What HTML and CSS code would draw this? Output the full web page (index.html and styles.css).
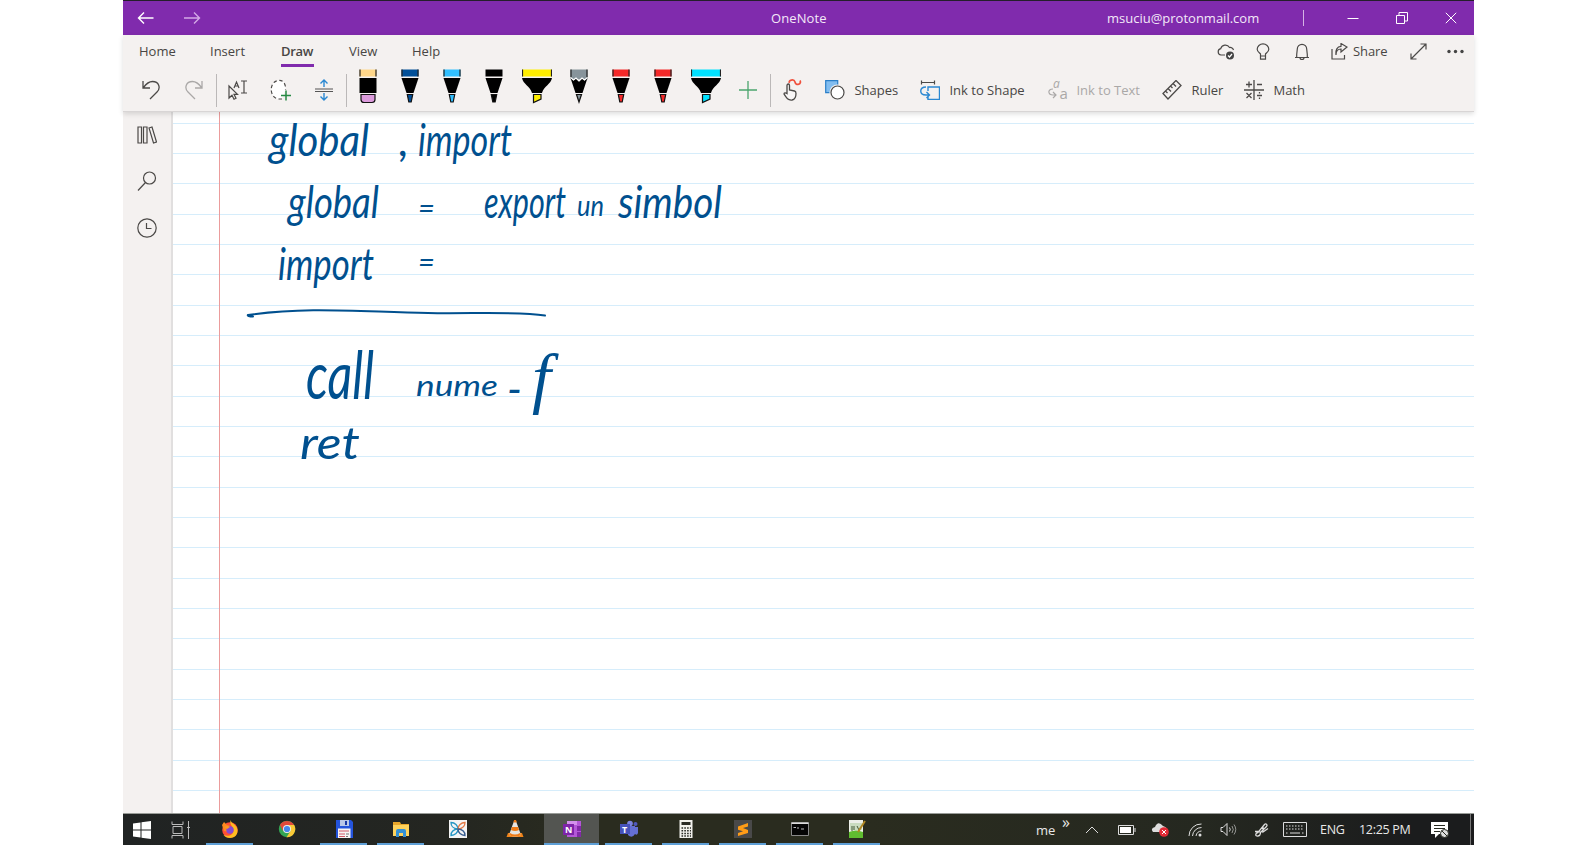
FILE: index.html
```html
<!DOCTYPE html>
<html lang="en">
<head>
<meta charset="utf-8">
<title>OneNote</title>
<link rel="stylesheet" href="styles.css">
</head>
<body>
<div class="desktop">
  <header class="titlebar">
    <div class="nav-arrows">
      <svg width="18" height="14" viewBox="0 0 18 14"><path d="M16.500 7H1.500M7 1.500 1.500 7 7 12.500"/></svg>
      <svg class="faded" width="18" height="14" viewBox="0 0 18 14"><path d="M0 7h15M10 1.500 15.500 7 10 12.500"/></svg>
    </div>
    <div class="title">OneNote</div>
    <div class="account">msuciu@protonmail.com</div>
    <div class="title-divider"></div>
    <div class="window-buttons">
      <svg width="12" height="12" viewBox="0 0 12 12"><path d="M.5 6.500h11"/></svg>
      <svg width="12" height="12" viewBox="0 0 12 12"><path d="M.5 3.500h8v8h-8zM3 3V.5h8.500V9H9"/></svg>
      <svg width="12" height="12" viewBox="0 0 12 12"><path d="m.8.8 10.400 10.400M11.200.8.8 11.200"/></svg>
    </div>
  </header>

  <div class="ribbon">
    <div class="tabs-row">
      <nav class="tabs">
        <span class="tab home">Home</span><span class="tab insert">Insert</span><span class="tab draw">Draw</span><span class="tab view">View</span><span class="tab help">Help</span>
      </nav>
      <div class="ribbon-actions">
        <svg class="sync" width="18" height="18" viewBox="0 0 18 18"><path d="M8 12H4a3.200 3.200 0 0 1-.3-6.300A4.800 4.800 0 0 1 12.500 4.500 3.300 3.300 0 0 1 16.500 7"/><circle cx="13" cy="12.500" r="4" fill="#444" stroke="none"/><path d="m11 12.500 1.500 1.500 2.500-3" stroke="#fff"/></svg>
        <svg class="bulb" width="14" height="18" viewBox="0 0 14 18"><path d="M4.500 13v-2C3.300 9.700 1.200 8.700 1.200 6.200a5.800 5.300 0 0 1 11.600 0c0 2.500-2.100 3.500-3.300 4.800v2zM4.500 13v3.200h5V13"/></svg>
        <svg class="bell" width="16" height="18" viewBox="0 0 16 18"><path d="M1 14.500h14M2.700 14.500v-3l.6-5.500a4.700 4.700 0 0 1 9.400 0l.6 5.500v3M6 14.500a2 2 0 0 0 4 0"/></svg>
        <svg class="share-icon" width="17" height="17" viewBox="0 0 17 17"><path d="M1 6v10h12.500v-4M5 12c0-4 2-6 5-6V9l6-5-6-3.500v2.800C6 3.500 4.500 7 5 12z"/></svg>
        <span class="share-label">Share</span>
        <svg class="expand" width="17" height="17" viewBox="0 0 17 17"><path d="M1 16 16 1M10.500 1H16v5.500M1 10.500V16h5.500"/></svg>
        <svg class="more" width="17" height="5" viewBox="0 0 17 5"><g fill="#444" stroke="none"><circle cx="2" cy="2.500" r="1.700"/><circle cx="8.500" cy="2.500" r="1.700"/><circle cx="15" cy="2.500" r="1.700"/></g></svg>
      </div>
    </div>

    <div class="tools-row">
      <div class="cell wide"><svg width="18" height="20" viewBox="0 0 18 20"><path d="M1 1v7h7M1.500 7.500C4 4 7 1.500 10.500 1.500c6.500 0 8.500 6.500 4.500 10.500L8 19" stroke-width="1.300"/></svg></div>
      <div class="cell wide disabled"><svg width="18" height="20" viewBox="0 0 18 20"><path d="M17 1v7h-7M16.500 7.500C14 4 11 1.500 7.500 1.500 1 1.500-1 8 3 12l7 7" stroke-width="1.300"/></svg></div>
      <div class="sep"></div>
      <div class="cell"><svg width="22" height="20" viewBox="0 0 22 20"><path d="M2 6v12l3-2.800 2 4 2-1-2-3.800h3.500zM7 8l2.500-6L12 8M8 6h3M14 1h6M14 13h6M17 1v12"/></svg></div>
      <div class="cell"><svg width="22" height="22" viewBox="0 0 22 22"><path d="M12 20H8C-1 18-1 3 8 1.500c5-1 8 3.500 7.500 9" stroke-dasharray="3.500 2.500" fill="#fff"/><path d="M16 11.500v10M11 16.500h10" stroke="#268a43" stroke-width="1.500"/></svg></div>
      <div class="cell"><svg width="18" height="22" viewBox="0 0 18 22"><path d="M0 10h18M0 12.500h18" stroke="#555"/><path d="M9 1v7M5.500 4.500 9 1l3.500 3.500M9 14v7M5.500 17.500 9 21l3.500-3.500" stroke="#2b88d2" stroke-width="1.400"/></svg></div>
      <div class="sep"></div>
      <div class="pens">
        <svg class="pen" viewBox="0 0 30 36"><path fill="#ffd78a" d="M6.500 1.500h17v7h-17z"/><path class="edge" d="M7 1.500v7M23 1.500v7"/><path d="M6.500 10h17v15h-17z"/><path fill="#dc9bdc" class="tip" d="M8 26.500h14v5q0 3-3 3h-8q-3 0-3-3z"/></svg>
        <svg class="pen" viewBox="0 0 30 36"><path fill="#004f99" d="M6.500 1.500h17v7h-17z"/><path class="edge" d="M7 1.500v7M23 1.500v7"/><path d="M6.500 10h17l-5 15h-7z"/><path fill="#004f99" class="tip" d="M12.300 26.500h5.400l-1.500 7.500h-2.400z"/></svg>
        <svg class="pen" viewBox="0 0 30 36"><path fill="#31bfff" d="M6.500 1.500h17v7h-17z"/><path class="edge" d="M7 1.500v7M23 1.500v7"/><path d="M6.500 10h17l-5 15h-7z"/><path fill="#31bfff" class="tip" d="M12.300 26.500h5.400l-1.500 7.500h-2.400z"/></svg>
        <svg class="pen" viewBox="0 0 30 36"><path d="M6.500 1.500h17v7h-17zM6.500 10h17l-5 15h-7z"/><path class="tip" d="M12.300 26.500h5.400l-1.500 7.500h-2.400z"/></svg>
        <svg class="pen" viewBox="0 0 30 36"><path fill="#ffee00" d="M0 1.500h30v7H0z"/><path class="edge" d="M.5 1.500v7M29.500 1.500v7"/><path d="M0 10h30c-1 6-8 8-10 15H10C8 18 1 16 0 10z"/><path fill="#ffee00" class="tip" d="M11.500 26.500h7.500v4.500l-7.500 3.500z"/></svg>
        <svg class="pen" viewBox="0 0 30 36"><path fill="#87949b" d="M6.500 1.500h17v10h-17z"/><path class="edge" d="M7 1.500v8M23 1.500v8"/><path d="m6.500 10 3 2.500 2.500-2 3 3 3-3 2.500 2 3-2.500-5 15h-7z"/><path fill="none" stroke="#fff" d="m6.500 9.500 3 2.500 2.500-2 3 3 3-3 2.500 2 3-2.500"/><path fill="#87949b" class="tip" d="M12.500 26.500h5L15 34z"/></svg>
        <svg class="pen" viewBox="0 0 30 36"><path fill="#f52929" d="M6.500 1.500h17v7h-17z"/><path class="edge" d="M7 1.500v7M23 1.500v7"/><path d="M6.500 10h17l-5 15h-7z"/><path fill="#f52929" class="tip" d="M12.300 26.500h5.400l-1.500 7.500h-2.400z"/></svg>
        <svg class="pen" viewBox="0 0 30 36"><path fill="#f52929" d="M6.500 1.500h17v7h-17z"/><path class="edge" d="M7 1.500v7M23 1.500v7"/><path d="M6.500 10h17l-5 15h-7z"/><path fill="#f52929" class="tip" d="M12.300 26.500h5.400l-1.500 7.500h-2.400z"/></svg>
        <svg class="pen" viewBox="0 0 30 36"><path fill="#00e1ff" d="M0 1.500h30v7H0z"/><path class="edge" d="M.5 1.500v7M29.500 1.500v7"/><path d="M0 10h30c-1 6-8 8-10 15H10C8 18 1 16 0 10z"/><path fill="#00e1ff" class="tip" d="M11.500 26.500h7.500v4.500l-7.500 3.500z"/></svg>
      </div>
      <div class="cell"><svg width="18" height="18" viewBox="0 0 18 18"><path d="M9 0v18M0 9h18" stroke="#4ba56d" stroke-width="1.300"/></svg></div>
      <div class="sep"></div>
      <div class="cell"><svg width="20" height="22" viewBox="0 0 20 22"><path d="M7.500 4C6 1 12-.5 13 3c1 4.500 7 2 5-1.500" stroke="#f0503c" stroke-width="1.700"/><path fill="#f8f6f6" d="M5 14V6.500c0-2 2.500-2 2.500 0V11l5 1c1.500.3 1.500 1 1.500 2.500 0 3-1 6-4 6.500-4 .5-5.500-2-8-6 0-1.500 1.500-1.500 3-.5z" stroke-width="1.300"/></svg></div>
      <div class="action shapes"><svg width="20" height="20" viewBox="0 0 20 20"><path fill="#82bdf0" stroke="#2b7fc8" d="M.7.7h12v12H.7z"/><circle cx="12.500" cy="12.500" r="7.500" fill="#f3f0f0" stroke="#f3f0f0"/><circle cx="12.500" cy="12.500" r="6.500" fill="#fff"/></svg><span>Shapes</span></div>
      <div class="action ink-shape"><svg width="20" height="20" viewBox="0 0 20 20"><path d="M1 2.500h14M1.500.5v4M14.500.5v4"/><path stroke="#2b88d2" stroke-width="1.400" d="M8 11V7h11.500v12.500H8V17M6 7c-7 0-7 8 0 8h3M6.500 12l3 3-3 3"/></svg><span>Ink to Shape</span></div>
      <div class="action ink-text disabled"><svg class="letters" width="20" height="20" viewBox="0 0 20 20"><path d="M5 9c-6 0-5 6 0 6h3M5 12l3 3-3 3"/><text x="5" y="8" font-size="12" font-style="italic">a</text><text x="11.500" y="19" font-size="15">a</text></svg><span>Ink to Text</span></div>
      <div class="action ruler"><svg width="20" height="20" viewBox="0 0 20 20"><path d="m1 13.500 13-13 5 5-13 13.500zM3.500 11l2 2M6 8.500l3 3M8.500 6l2 2M11 3.500l3 3" stroke-width="1.300"/></svg><span>Ruler</span></div>
      <div class="action math"><svg width="20" height="20" viewBox="0 0 20 20"><path d="M10 0v20M0 10h20M5 1.500v6M2 4.500h6M13 4.500h5M2.500 13l5 5M7.500 13l-5 5M13 15.500h5M15.500 12v1.500M15.500 17.500V19" stroke-width="1.300"/></svg><span>Math</span></div>
    </div>
  </div>

  <div class="workspace">
    <aside class="sidebar">
      <svg width="20" height="18" viewBox="0 0 20 18"><path d="M1 1h3.500v16H1zM6.500 1H10v16H6.500zM12 2l3-1 4.500 15-3 1z"/></svg>
      <svg width="20" height="20" viewBox="0 0 20 20"><circle cx="12.500" cy="7" r="6"/><path d="m8.500 11.500-7.500 8"/></svg>
      <svg width="20" height="20" viewBox="0 0 20 20"><circle cx="10" cy="10" r="9.200"/><path d="M9.500 5v5.500h5"/></svg>
    </aside>
    <main class="page">
      <svg class="ink" width="1301" height="701" viewBox="173 112 1301 701">
        <g class="ink-words">
          <text x="269" y="156" textLength="100" lengthAdjust="spacingAndGlyphs">global</text>
          <text x="399" y="156">,</text>
          <text x="418" y="156" textLength="94" lengthAdjust="spacingAndGlyphs">import</text>
          <text x="288" y="218" textLength="91" lengthAdjust="spacingAndGlyphs">global</text>
          <text class="small" x="418" y="218">=</text>
          <text x="484" y="218" textLength="82" lengthAdjust="spacingAndGlyphs">export</text>
          <text class="small" x="577" y="216" textLength="27" lengthAdjust="spacingAndGlyphs">un</text>
          <text x="618" y="218" textLength="104" lengthAdjust="spacingAndGlyphs">simbol</text>
          <text x="278" y="280" textLength="96" lengthAdjust="spacingAndGlyphs">import</text>
          <text class="small" x="418" y="272">=</text>
          <text class="tall" x="306" y="399" textLength="68" lengthAdjust="spacingAndGlyphs">call</text>
          <text class="small" x="416" y="396" textLength="82" lengthAdjust="spacingAndGlyphs">nume</text>
          <text x="507" y="405" textLength="15" lengthAdjust="spacingAndGlyphs">-</text>
          <text class="long" x="532" y="401">f</text>
          <text x="300" y="459" textLength="60" lengthAdjust="spacingAndGlyphs">ret</text>
        </g>
        <path class="rule" d="M253 316.500c-4 0-6-1-5-1.500 60-9 115-3 180-2 42 1 88-2 117 2.500"/>
      </svg>
    </main>
  </div>

  <footer class="taskbar">
    <div class="task-start"><svg width="18" height="18" viewBox="0 0 18 18" fill="#fff"><path d="m0 2.500 7.500-1V8.500H0zM8.500 1.300 18 0v8.500H8.500zM0 9.500h7.500v7L0 15.500zM8.500 9.500H18V18l-9.500-1.300z"/></svg></div>
    <div class="task-view"><svg width="20" height="18" viewBox="0 0 20 18" fill="none" stroke="#bbb"><path d="M1 .5v3h11v-3M1 17.500v-3h11v3M2 5.500h9v7H2zM17.500 0v18M16 6.500h3"/></svg></div>
    <div class="apps">
      <div class="app open"><svg viewBox="0 0 18 18"><circle cx="9" cy="10" r="7.800" fill="#ff4f35"/><path fill="#ffbd20" d="M9.500 0c1 4 5 4 6.500 8 2 6-2 10-7 10-3 0-5-1-6.500-3 5 2 10 0 10-5 0-4-4-4-3-10z"/><path fill="#ff8a20" d="M1 5 3 2l3 3 3 1-3 3 2 3-5-1z"/><circle cx="9" cy="10" r="3.700" fill="#854bd1"/><path fill="#ff9a20" d="M3 7q4-2 6 0l-3 2z"/></svg></div>
      <div class="app"><svg viewBox="0 0 18 18"><circle cx="9" cy="9" r="8.200" fill="#33a554"/><path fill="#e2493b" d="M1.900 5A8.200 8.200 0 0 1 16.100 5H9L5 11z"/><path fill="#f9c936" d="M16.200 5A8.200 8.200 0 0 1 8.500 17.200L12.500 11 9 5z"/><circle cx="9" cy="9" r="4" fill="#eee"/><circle cx="9" cy="9" r="3.100" fill="#4787ed"/></svg></div>
      <div class="app open"><svg viewBox="0 0 18 18"><path fill="#2454dc" d="M1 0h15l2 2v16H1z"/><path fill="#b9c7e8" d="M5 0h9v6H5z"/><path fill="#1738a5" d="M10 1h2v4h-2z"/><path fill="#f6f4f4" d="M3 8.500h12.500V18H3z"/><path stroke="#cf5966" d="M4 11h10M4 14h6M4 16.500h6"/><path stroke="#777" d="M11 14h3M11 16.500h2"/></svg></div>
      <div class="app open"><svg viewBox="0 0 18 18"><path fill="#e9a72b" d="M1 2h7l1 2h8v4H1z"/><path fill="#ffd35c" d="M1 5h16v11H1z"/><path fill="#3491d5" d="M4 17v-6q0-2 2-2h6q2 0 2 2v6h-3v-4H7v4z"/></svg></div>
      <div class="app"><svg viewBox="0 0 18 18"><path fill="#f4f4f4" d="M0 0h18v18H0z"/><g fill="none" stroke-width="1.300"><path stroke="#2596c4" d="M2 2.500c4 0 7 3 7 6.500s-3 6.500-7 6.500c0-4 2-6 7-6.500C4 8.500 2 7 2 2.500z"/><path stroke="#e37946" d="M16 2.500c-4 0-7 3-7 6.500 5-.5 7-2.500 7-6.500z"/><path stroke="#395e91" d="M16 15.500c-4 0-7-3-7-6.500 5 .5 7 2.500 7 6.500z"/></g></svg></div>
      <div class="app"><svg viewBox="0 0 18 18"><path fill="#f18418" d="m2 13-1.500 4h17L16 13z"/><path fill="#e8e4df" d="M8 1h2l5 14q-6 3-12 0z"/><path fill="#f07b16" d="M7.500 2.500 8 0h2l.8 2.500zM6 7h6l1 3q-4 2-8 0zM4 13q5 3 10 0l1 2q-6 3-12 0z"/></svg></div>
      <div class="app open active"><svg viewBox="0 0 18 18"><path fill="#b457d7" d="M4 1h14v16H4z"/><path fill="#d390ec" d="M4 1h10v4H4z"/><path fill="#8229a8" d="M14 6h4v5h-4zM14 12h4v5h-4z"/><path fill="#7e24a8" d="M0 4h11v11H0z"/><text x="2" y="13" fill="#fff" font-size="9" font-weight="700">N</text></svg></div>
      <div class="app open"><svg viewBox="0 0 18 18"><circle cx="10" cy="3.500" r="2.800" fill="#7b83e0"/><circle cx="15.500" cy="4" r="2" fill="#5059bd"/><path fill="#6570d4" d="M8 6h7v8q-3 5-7 1zM15 7h3v6q-1 3-3 1z"/><path fill="#4652ba" d="M0 4h10v10H0z"/><text x="2" y="12.500" fill="#fff" font-size="9" font-weight="700">T</text></svg></div>
      <div class="app open"><svg viewBox="0 0 18 18"><path fill="#f1f1ec" d="M2.500 0h13v18h-13z"/><path fill="#292b24" d="M4.500 2h9v3h-9z"/><path stroke="#292b24" stroke-width="1.500" stroke-dasharray="1.600 1.200" d="M4.500 8h9.500M4.500 10.700h9.500M4.500 13.400h9.500M4.500 16h9.500"/></svg></div>
      <div class="app open"><svg viewBox="0 0 18 18"><path fill="#494949" d="M0 0h18v18H0z"/><path fill="#ff9c17" d="M4 6.500 14 3v3.500L9 8l5 2v3L4 16v-3l5-1.700-5-1.500z"/></svg></div>
      <div class="app open"><svg viewBox="0 0 18 18"><path fill="#050505" stroke="#888" d="M.5 2.500h17v13H.5z"/><path fill="#ddd" d="M.5 2.500h17V4H.5z"/><path stroke="#bbb" d="M2.500 7.500H5M6 8h2M10 9h3" stroke-width="1.200"/></svg></div>
      <div class="app open"><svg viewBox="0 0 18 18"><path fill="#ecefe9" d="M1 0h14v18H1z"/><path fill="#c9dcc0" d="M2 3h12v7H2z"/><path fill="#60bd30" d="M1 12q7-3 14 0v6H1z"/><path stroke="#445a38" d="M4 6v5M6 6v4M9 6l2 4"/><path stroke="#b08723" stroke-width="2" d="M17 1 10 12"/></svg></div>
    </div>
    <div class="tray">
      <span class="tray-me">me</span><span class="tray-chevrons">»</span>
      <svg class="t-up" width="14" height="8" viewBox="0 0 14 8"><path d="m1 7 6-6 6 6"/></svg>
      <svg class="t-bat" width="18" height="10" viewBox="0 0 18 10"><path d="M.5.5h15v9H.5zM17 3v4"/><path fill="#fff" stroke="none" d="M2 2h11v6H2z"/></svg>
      <svg class="t-cloud" width="18" height="14" viewBox="0 0 18 14"><path fill="#ddd" stroke="none" d="M2 9Q-1 5 4 4q3-7 8-1 4 1 4 4v2z"/><circle cx="13" cy="9" r="4.800" fill="#e12a35" stroke="none"/><path stroke="#fff" d="m11 7 4 4M15 7l-4 4"/></svg>
      <svg class="t-wifi" width="14" height="14" viewBox="0 0 14 14"><path d="M1 13A12 12 0 0 1 13.500 1M4.500 13a9 9 0 0 1 9-8.500M8 13a6 6 0 0 1 5.500-5"/><circle cx="12" cy="12" r="1.500" fill="#ddd" stroke="none"/></svg>
      <svg class="t-vol" width="17" height="13" viewBox="0 0 17 13"><path d="M1 4.500h2l4-4v12l-4-4H1zM9.500 4.500q1.500 2 0 4"/><path opacity=".6" d="M12 3q2.500 3.500 0 7M14 1.500q3.500 5 0 10"/></svg>
      <svg class="t-pen" width="16" height="14" viewBox="0 0 16 14"><path stroke-width="1.300" d="M1 8.500h4c2 0 2 4-1 4.500s-3-3 0-3.500L10.500 1.500c1.500-1.500 3.500.5 2 2L6 10M9 3v6l5-3.500"/></svg>
      <svg class="t-key" width="24" height="15" viewBox="0 0 24 15"><path d="M.5.5h23v14H.5z"/><path stroke-dasharray="1.500 1.500" d="M3 4h18M3 7h18M3 11h2M19 11h2"/><path d="M7 11h10"/></svg>
      <span class="tray-lang">ENG</span>
      <span class="tray-time">12:25 PM</span>
      <svg class="t-note" width="19" height="18" viewBox="0 0 19 18"><path fill="#fff" stroke="none" d="M0 1h17v12h-9l-4 4v-4H0z"/><path stroke="#282a22" d="M3 4.500h11M3 7.500h11M3 10.500h6"/><circle cx="13.500" cy="12.500" r="4" fill="#ddd" stroke="#282a22"/><path stroke="#282a22" d="m11 10 5 5"/></svg>
    </div>
    <div class="show-desktop"></div>
  </footer>
</div>
</body>
</html>
```
FILE: styles.css
```css
* { box-sizing: border-box; }
body { margin: 0; background: #fff; font-family: "Open Sans", "Noto Sans", sans-serif; font-size: 13px; color: #484644; overflow: hidden; }
svg { display: block; flex: none; }
.desktop { width: 1351px; height: 845px; margin-left: 123px; display: flex; flex-direction: column; }

.titlebar { height: 35px; flex: none; background: #802bad; border-top: 1px solid #251e2b; color: #f3e8f8; display: flex; align-items: center; padding-left: 14px; }
.titlebar svg { fill: none; stroke: #fff; stroke-width: 1; }
.titlebar .nav-arrows { display: flex; gap: 29px; width: 634px; }
.titlebar .nav-arrows svg { stroke-width: 1.4; }
.titlebar .nav-arrows .faded { stroke: #d3a9e6; }
.title { width: 336px; letter-spacing: .1px; }
.account { width: 196px; }
.title-divider { width: 1px; height: 16px; background: #d5b3e5; margin-right: 43px; }
.window-buttons { display: flex; gap: 37px; }

.ribbon { height: 77px; flex: none; background: #f4f1f0; border-bottom: 1px solid #d8d5d5; box-shadow: 0 2px 5px #0002; position: relative; z-index: 1; }
.ribbon svg, .sidebar svg { fill: none; stroke: #4b4947; stroke-width: 1.2; }
.tabs-row { height: 33px; display: flex; justify-content: space-between; padding: 0 10px 0 16px; }
.tabs { display: flex; }
.tab { height: 32px; line-height: 33px; white-space: nowrap; }
.home { width: 71px; }
.insert { width: 71px; }
.draw { width: 33px; margin-right: 35px; font-weight: 600; border-bottom: 3px solid #802bad; letter-spacing: -.3px; }
.view { width: 63px; }
.ribbon-actions { display: flex; align-items: center; }
.sync { margin-right: 21px; }
.bulb { margin-right: 24px; }
.bell { margin-right: 21px; }
.share-icon { margin-right: 5px; }
.share-label { width: 57px; letter-spacing: -.1px; line-height: 16px; padding-bottom: 1px; }
.expand { margin-right: 20px; }
.tools-row { height: 43px; display: flex; align-items: center; padding: 1px 0 0 6px; }
.cell { width: 42.9px; height: 42px; display: flex; align-items: center; justify-content: center; flex: none; }
.cell.wide { width: 43.5px; }
.sep { width: 1px; height: 33px; background: #bbb8b8; flex: none; }
.disabled { color: #aaa8a7; }
.ribbon .disabled svg { stroke: #aaa8a7; }
.ribbon .letters text { fill: #aaa8a7; stroke: none; }
.ribbon .letters { overflow: visible; }
.pens { display: flex; height: 42px; width: 380px; justify-content: space-around; align-items: flex-start; }
.ribbon svg.pen { width: 30px; height: 36px; fill: #000; stroke: none; margin-top: -1px; }
.pen .edge { stroke: #222; }
.pen .tip { stroke: #111; }
.action { display: flex; align-items: center; gap: 9px; white-space: nowrap; flex: none; }
.shapes { margin-left: 12px; width: 95px; }
.ink-shape { width: 128px; }
.ink-text { width: 114px; gap: 8px; }
.ruler { width: 82px; }

.workspace { flex: 1; display: flex; min-height: 0; }
.sidebar { width: 50px; background: #f4f1f0; border-right: 2px solid #e1dfdf; display: flex; flex-direction: column; align-items: center; padding-top: 14px; gap: 27px; }
.page { flex: 1; overflow: hidden; background: linear-gradient(90deg, transparent 46px, #eb9c9c 46px, #eb9c9c 47px, transparent 47px), repeating-linear-gradient(180deg, transparent 0, transparent 29.3px, #d6edfb 29.3px, #d6edfb 30.32px) 0 -18.500px / 100% 760px; }
.ink-words { font-family: Lato, "Open Sans", sans-serif; font-style: italic; font-size: 45px; fill: #00508f; }
.ink-words .small { font-size: 29px; }
.ink-words .tall { font-size: 66px; }
.ink-words .long { font-family: "Liberation Serif", serif; font-size: 68px; }
.rule { fill: none; stroke: #00508f; stroke-width: 2; stroke-linecap: round; }

.taskbar { height: 32px; flex: none; background: linear-gradient(90deg, #202323 0, #242621 24%, #2a2c1f 35%, #2a2c1f 55%, #252820 80%, #1b1c1d 95%); border-top: 1px solid #999c98; color: #e8e8e8; display: flex; align-items: center; }
.task-start { width: 38px; display: flex; justify-content: center; }
.task-view { width: 40px; display: flex; justify-content: center; }
.apps { display: flex; height: 31px; }
.app { width: 47px; margin: 0 5px; height: 31px; display: flex; align-items: center; justify-content: center; padding-top: 1px; border-bottom: 2px solid transparent; }
.app svg { width: 18px; height: 18px; }
.open { border-bottom-color: #5e9fd6; }
.active { width: 55px; margin: 0 1px; background: #535551; }
.tray { display: flex; align-items: center; margin-left: auto; }
.tray svg { fill: none; stroke: #ddd; }
.tray-me { width: 26px; }
.tray-chevrons { width: 23px; font-size: 16px; line-height: 16px; padding-bottom: 15px; }
.t-up { margin-right: 19px; }
.t-bat { margin-right: 15px; }
.t-cloud { margin-right: 19px; }
.t-wifi { margin-right: 18px; }
.t-vol { margin-right: 17px; }
.t-pen { margin-right: 13px; }
.t-key { margin-right: 13px; }
.tray-lang { width: 39px; font-size: 12.5px; letter-spacing: -.3px; }
.tray-time { width: 72px; font-size: 12.5px; letter-spacing: -.3px; white-space: nowrap; }
.show-desktop { width: 1px; height: 31px; background: #777; margin: 0 3px 0 20px; }
```
